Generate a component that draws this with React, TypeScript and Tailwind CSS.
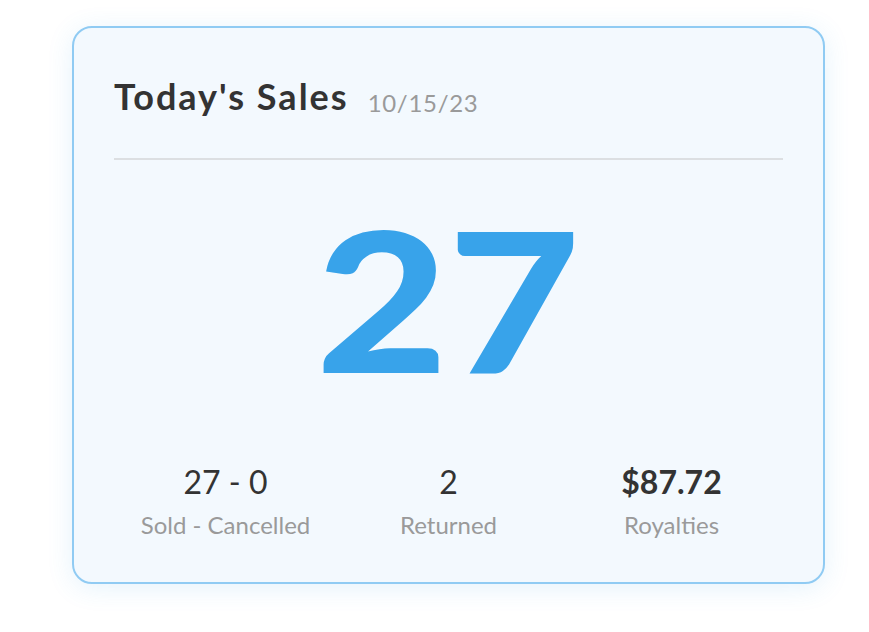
const stats = [
  { value: "27 - 0", label: "Sold - Cancelled", bold: false },
  { value: "2", label: "Returned", bold: false },
  { value: "$87.72", label: "Royalties", bold: true },
];

export default function App() {
  return (
    <div className="min-h-[632px] w-full bg-white pl-[72px] pt-[26px] font-['Lato','Liberation_Sans',sans-serif]">
      <div className="w-[753px] h-[558px] rounded-[20px] border-2 border-[#90cbf3] bg-[#f3f9fe] px-10 pt-[47px] shadow-[0_4px_26px_rgba(56,163,234,0.13)]">
        {/* header */}
        <div className="flex items-end border-b-2 border-[#dcdfe2] pb-10">
          <h2 className="text-[36px] leading-[1.2] font-bold tracking-[2px] text-[#333333]">Today's Sales</h2>
          <span className="ml-[19px] text-[24px] leading-[1.2] tracking-[0.7px] text-[#9a9a9a]">10/15/23</span>
        </div>

        {/* big number */}
        <div className="mt-[41px] flex justify-center">
          <span className="inline-block scale-x-[1.17] text-[195px] font-black leading-none text-[#38a3ea]">
            27
          </span>
        </div>

        {/* stats */}
        <div className="mt-[67px] grid grid-cols-3">
          {stats.map((s) => (
            <div key={s.label} className="flex flex-col items-center">
              <span className={`text-[32px] leading-[1.2] text-[#333333] ${s.bold ? "font-bold" : "font-normal"}`}>
                {s.value}
              </span>
              <span className="mt-[9px] text-[24px] leading-[1.2] text-[#9a9a9a]">{s.label}</span>
            </div>
          ))}
        </div>
      </div>
    </div>
  );
}
